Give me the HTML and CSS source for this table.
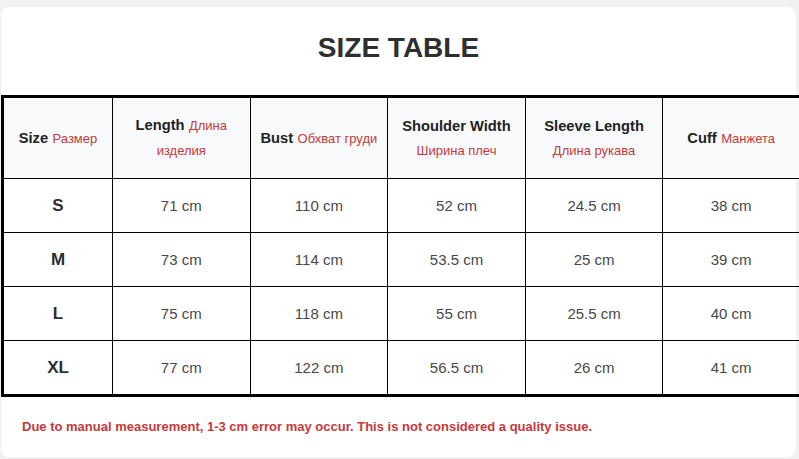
FILE: index.html
```html
<!DOCTYPE html>
<html>
<head>
<meta charset="utf-8">
<link rel="stylesheet" href="styles.css">
</head>
<body>
<div class="card">
  <h1 class="title">SIZE TABLE</h1>
  <table class="sizes">
    <colgroup>
      <col class="c-size"><col class="c"><col class="c"><col class="c"><col class="c"><col class="c">
    </colgroup>
    <thead>
      <tr>
        <th><b>Size</b> <span class="ru">Размер</span></th>
        <th><b>Length</b> <span class="ru">Длина</span><br><span class="ru">изделия</span></th>
        <th><b>Bust</b> <span class="ru">Обхват груди</span></th>
        <th><b>Shoulder Width</b><br><span class="ru">Ширина плеч</span></th>
        <th><b>Sleeve Length</b><br><span class="ru">Длина рукава</span></th>
        <th><b>Cuff</b> <span class="ru">Манжета</span></th>
      </tr>
    </thead>
    <tbody>
      <tr><td class="sz">S</td><td>71 cm</td><td>110 cm</td><td>52 cm</td><td>24.5 cm</td><td>38 cm</td></tr>
      <tr><td class="sz">M</td><td>73 cm</td><td>114 cm</td><td>53.5 cm</td><td>25 cm</td><td>39 cm</td></tr>
      <tr><td class="sz">L</td><td>75 cm</td><td>118 cm</td><td>55 cm</td><td>25.5 cm</td><td>40 cm</td></tr>
      <tr><td class="sz">XL</td><td>77 cm</td><td>122 cm</td><td>56.5 cm</td><td>26 cm</td><td>41 cm</td></tr>
    </tbody>
  </table>
  <p class="note">Due to manual measurement, 1-3 cm error may occur. This is not considered a quality issue.</p>
</div>
</body>
</html>
```

FILE: styles.css
```css
html, body {
  margin: 0;
  padding: 0;
  background: #f1f1f1;
  font-family: "Liberation Sans", Arial, sans-serif;
  overflow: hidden;
}
.card {
  margin: 7px 0 0 1px;
  width: 795px;
  height: 450px;
  background: #fff;
  border-radius: 8px;
  box-sizing: border-box;
}
.title {
  margin: 0;
  height: 88px;
  line-height: 82px;
  text-align: center;
  font-size: 28px;
  font-weight: bold;
  color: #2f2f2f;
}
.sizes {
  border-collapse: collapse;
  table-layout: fixed;
  width: 801px;
  border: 3px solid #000;
}
.c-size { width: 110px; }
.sizes th, .sizes td {
  border: 1px solid #000;
  text-align: center;
  padding: 0 6px;
}
.sizes th {
  height: 80px;
  background: #f8f9fa;
  font-weight: normal;
  line-height: 24px;
  color: #222;
}
.sizes th b {
  font-size: 14.7px;
  font-weight: bold;
  color: #222;
}
.ru {
  font-size: 13px;
  color: #c4393c;
}
.sizes td {
  height: 53px;
  font-size: 15px;
  color: #484848;
}
.sizes td.sz {
  font-size: 17px;
  font-weight: bold;
  color: #2d2d2d;
}
.sizes tbody tr:last-child td {
  border-bottom: 3px solid #000;
}
.note {
  margin: 0;
  padding: 22px 0 0 21px;
  font-size: 13px;
  font-weight: bold;
  color: #c8383a;
}
```
